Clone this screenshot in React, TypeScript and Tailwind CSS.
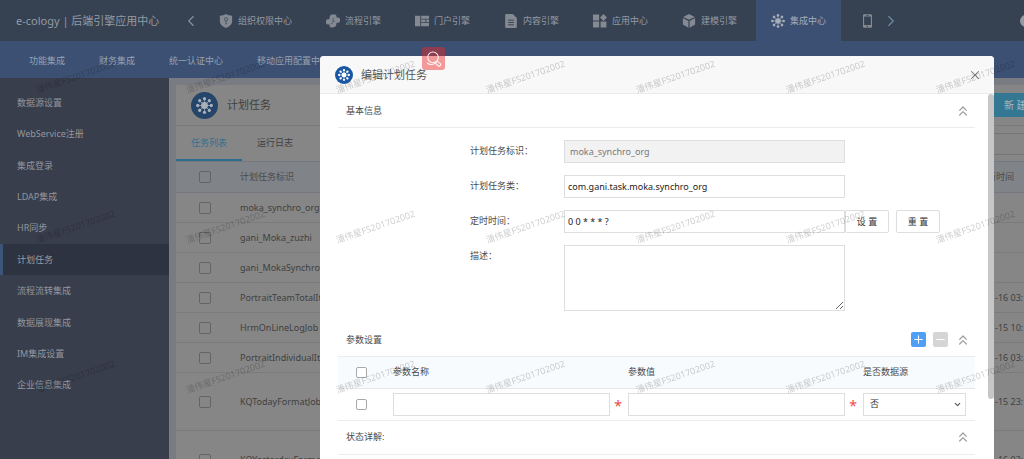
import React, { useState } from "react";
import { ChevronDown, ChevronLeft, ChevronRight, ChevronsUp, Minus, Plus, X } from "lucide-react";

type IconProps = { className?: string };

const HubIcon: React.FC<IconProps> = ({ className }) => (
  <svg viewBox="0 0 24 24" className={className} fill="currentColor" stroke="currentColor" aria-hidden="true">
    <circle cx="12" cy="12" r="4.8" stroke="none" />
    {[0, 45, 90, 135, 180, 225, 270, 315].map((angle) => (
      <g key={angle} transform={`rotate(${angle} 12 12)`}>
        <line x1="12" y1="9" x2="12" y2="3" strokeWidth="1" />
        <circle cx="12" cy="2.4" r="2.3" stroke="none" />
      </g>
    ))}
  </svg>
);

const ShieldIcon: React.FC<IconProps> = ({ className }) => (
  <svg viewBox="0 0 24 24" className={className} fill="currentColor" aria-hidden="true">
    <path d="M12 0C9 2 5.500 2.800 1.500 3v10c0 5 5 9 10.500 11 5.500-2 10.500-6 10.500-11V3c-4-.2-7.500-1-10.500-3z" />
    <circle cx="12" cy="9" r="2.800" fill="none" stroke="#4b5462" strokeWidth="1.600" />
    <path d="M12 12v6M12 15.500h2" stroke="#4b5462" strokeWidth="1.600" />
  </svg>
);

const FlowIcon: React.FC<IconProps> = ({ className }) => (
  <svg viewBox="0 0 24 24" className={className} fill="currentColor" aria-hidden="true">
    <path d="M10 1h5a3 3 0 0 1 3 3v2h3a3 3 0 0 1 3 3v3a3 3 0 0 1-3 3h-3v1c0 4-2 7-6 7H9a3 3 0 0 1-3-3v-2H3a3 3 0 0 1-3-3v-3a3 3 0 0 1 3-3h3V8c0-4 1-6 4-7z" />
    <path d="M14 7c-3 0-2 3-2 5s0 5-4 5M12 12h3" fill="none" stroke="#364152" strokeWidth="1" />
  </svg>
);

const PortalIcon: React.FC<IconProps> = ({ className }) => (
  <svg viewBox="0 0 24 24" className={className} fill="currentColor" aria-hidden="true">
    <path d="M0 3h9v18H0zM10.500 3H24v5H10.500zM10.500 9.500H18V14h-7.500zM19.500 9.500H24V14h-4.500zM10.500 15.500H24V21H10.500z" />
  </svg>
);

const DocIcon: React.FC<IconProps> = ({ className }) => (
  <svg viewBox="0 0 24 24" className={className} fill="currentColor" aria-hidden="true">
    <path d="M4 0h11l7 7v15a2 2 0 0 1-2 2H4a2 2 0 0 1-2-2V2a2 2 0 0 1 2-2z" />
    <path d="M7 10.500h10M7 14.500h10M7 18.500h10" fill="none" stroke="#364152" strokeWidth="1.600" />
  </svg>
);

const AppsIcon: React.FC<IconProps> = ({ className }) => (
  <svg viewBox="0 0 24 24" className={className} fill="currentColor" aria-hidden="true">
    <path d="M0 1h10.500v10H0zM0 13h10.500v10H0zM13 13h10v10H13zM18 0l6 6-6 6-6-6z" />
  </svg>
);

const CubeIcon: React.FC<IconProps> = ({ className }) => (
  <svg viewBox="0 0 24 24" className={className} fill="currentColor" aria-hidden="true">
    <path d="M12 0l10 5-10 5L2 5zM1.500 7L11 12v11.500L1.500 18zM22.500 7L13 12v11.500l9.500-5.500z" />
  </svg>
);

const PhoneIcon: React.FC<IconProps> = ({ className }) => (
  <svg viewBox="0 0 16 24" className={className} aria-hidden="true">
    <path
      fill="currentColor"
      fillRule="evenodd"
      d="M2 0h12a2 2 0 0 1 2 2v20a2 2 0 0 1-2 2H2a2 2 0 0 1-2-2V2a2 2 0 0 1 2-2zm0 4v15h12V4zM6 1.500v1h4v-1zM8 20.300a1.300 1.300 0 1 0 0 2.500 1.300 1.300 0 0 0 0-2.500z"
    />
  </svg>
);

const topNav = [
  { name: "组织权限中心", icon: ShieldIcon },
  { name: "流程引擎", icon: FlowIcon },
  { name: "门户引擎", icon: PortalIcon },
  { name: "内容引擎", icon: DocIcon },
  { name: "应用中心", icon: AppsIcon },
  { name: "建模引擎", icon: CubeIcon },
  { name: "集成中心", icon: HubIcon, active: true },
];

const subNav = ["功能集成", "财务集成", "统一认证中心", "移动应用配置中心"];

const sideMenu = [
  "数据源设置",
  "WebService注册",
  "集成登录",
  "LDAP集成",
  "HR同步",
  "计划任务",
  "流程流转集成",
  "数据展现集成",
  "IM集成设置",
  "企业信息集成",
];

const tasks = [
  { name: "moka_synchro_org", time: "" },
  { name: "gani_Moka_zuzhi", time: "" },
  { name: "gani_MokaSynchro", time: "" },
  { name: "PortraitTeamTotalIt", time: "-16 03:" },
  { name: "HrmOnLineLogJob", time: "-15 10:" },
  { name: "PortraitIndividualIt", time: "-16 03:" },
  { name: "KQTodayFormatJob", time: "-15 23:", tall: true },
  { name: "KQYesterdayFormat", time: "-16 03:", tall: true },
];

const Header = () => (
  <header className="flex h-[41px] shrink-0 items-center overflow-hidden bg-[#364152] text-[#949aa2]">
    <h1 className="w-[172px] shrink-0 whitespace-nowrap pl-4 text-[11px]">e-cology | 后端引擎应用中心</h1>
    <button type="button" aria-label="上一页" className="flex w-8 shrink-0 pl-[10px] text-[#8494a0]">
      <ChevronLeft className="h-[18px] w-[18px]" strokeWidth={1.5} />
    </button>
    <nav className="flex h-full gap-1">
      {topNav.map(({ name, icon: Icon, active }) => (
        <a
          key={name}
          href="#"
          className={`flex items-center gap-[5px] whitespace-nowrap px-[15px] ${active ? "bg-[#3c5073] text-[#a4acb8]" : ""}`}
        >
          <Icon className={`h-[14px] w-[14px] shrink-0 ${active ? "text-[#a8aeb8]" : "text-[#858a92]"}`} />
          {name}
        </a>
      ))}
    </nav>
    <a href="#" aria-label="移动" className="ml-[22px] shrink-0 text-[#858a92]">
      <PhoneIcon className="h-[14px] w-[9px]" />
    </a>
    <button type="button" aria-label="下一页" className="ml-[10px] shrink-0 text-[#6b8ea3]">
      <ChevronRight className="h-[18px] w-[18px]" strokeWidth={1.5} />
    </button>
    <span className="-mr-2 ml-auto h-3 w-3 shrink-0 rounded-full bg-[#949aa2]" />
  </header>
);

const Sidebar = () => (
  <aside className="w-[169px] shrink-0 bg-[#383e4c] pt-[9px]">
    <ul className="flex h-[314px] flex-col">
      {sideMenu.map((item) => {
        const active = item === "计划任务";
        return (
          <li key={item} className="flex-1">
            <a
              href="#"
              className={`flex h-full items-center border-l-[3px] pl-[14px] ${
                active ? "border-[#3c5579] bg-[#2d3341] text-[#9a9da5]" : "border-transparent text-[#93969d]"
              }`}
            >
              {item}
            </a>
          </li>
        );
      })}
    </ul>
  </aside>
);

const checkStyle = "block h-[11px] w-[11px] appearance-none rounded-xs border border-[#a8a8a8] bg-white";
const taskCheckStyle = "block h-3 w-3 appearance-none rounded-xs border border-[#646464]";

const TaskList = () => (
  <main className="min-w-0 flex-1 bg-[#797b82] pl-[7px] pt-[7px]">
    <div className="overflow-hidden bg-[#868686] text-[#3f3f3f]">
      <div className="flex h-[41px] items-center border-b border-[#7a7a7a] pl-[15px]">
        <span className="flex h-[27px] w-[27px] items-center justify-center rounded-full bg-[#25456b] text-[#aab0b8]">
          <HubIcon className="h-[17px] w-[17px]" />
        </span>
        <h2 className="ml-[9px] text-[11px]">计划任务</h2>
        <button
          type="button"
          className="ml-auto h-6 w-9 overflow-hidden whitespace-nowrap bg-[#347793] pl-4 text-left text-[10px] text-[#a9b6bf]"
        >
          新 建
        </button>
      </div>
      <div className="flex h-[35px] items-center">
        <a href="#" className="flex h-full items-center border-b-2 border-[#2c6c8c] px-[15px] text-[#2f7191]">
          任务列表
        </a>
        <a href="#" className="flex h-full items-center border-b-2 border-transparent px-[15px]">
          运行日志
        </a>
        <input type="search" aria-label="搜索" className="ml-auto h-[22px] w-12 appearance-none border-y border-[#767676]" />
      </div>
      <table className="w-full table-fixed border-collapse">
        <thead>
          <tr className="h-[31px] border-y border-[#75797f] bg-[#808388] text-left text-[#4a4a4a]">
            <th className="w-[64px] pl-[23px]">
              <input type="checkbox" aria-label="全选" className={taskCheckStyle} />
            </th>
            <th className="font-normal">计划任务标识</th>
            <th className="w-[37px] whitespace-nowrap font-normal">新时间</th>
          </tr>
        </thead>
        <tbody>
          {tasks.map((task) => (
            <tr key={task.name} className={`border-b border-[#7b7b7b] ${task.tall ? "h-[58px]" : "h-[30px]"}`}>
              <td className="pl-[23px]">
                <input type="checkbox" aria-label={task.name} className={taskCheckStyle} />
              </td>
              <td className="whitespace-nowrap">{task.name}</td>
              <td className="whitespace-nowrap pl-2">{task.time}</td>
            </tr>
          ))}
        </tbody>
      </table>
    </div>
  </main>
);

const SectionTitle: React.FC<{ title: string; children?: React.ReactNode }> = ({ title, children }) => (
  <div className="flex h-[34px] items-center justify-between border-b border-[#ececec] pl-2 pr-1">
    <h3>{title}</h3>
    <div className="flex items-center gap-[7px]">
      {children}
      <button type="button" aria-label="收起" className="text-[#9c9c9c]">
        <ChevronsUp className="h-4 w-4" strokeWidth={1.8} />
      </button>
    </div>
  </div>
);

const inputStyle = "h-[23px] min-w-0 border border-[#dedede] bg-white px-[3px] text-[#222] outline-none";
const buttonStyle = "h-[23px] w-11 rounded-xs border border-[#dedede] bg-white text-[#333]";

const EditDialog = () => {
  const [taskClass, setTaskClass] = useState("com.gani.task.moka.synchro_org");
  const [cron, setCron] = useState("0 0 * * * ?");
  const [desc, setDesc] = useState("");

  return (
    <div className="fixed inset-0 flex pl-80 pr-[30px] pt-14">
      <div
        role="dialog"
        aria-label="编辑计划任务"
        className="flex min-w-0 flex-1 flex-col overflow-hidden rounded-t-[4px] bg-white text-[#4a4a4a]"
      >
        <div className="flex h-[38px] shrink-0 items-center border-b border-[#ebebeb] bg-[#f8f8f8] pl-[15px] pr-3">
          <span className="flex h-[18px] w-[18px] items-center justify-center rounded-full bg-[#1a57a3] text-white">
            <HubIcon className="h-3 w-3" />
          </span>
          <h2 className="ml-2 text-[11px] text-[#555]">编辑计划任务</h2>
          <button type="button" aria-label="关闭" className="ml-auto text-[#777]">
            <X className="h-[14px] w-[14px]" strokeWidth={1.8} />
          </button>
        </div>

        <div className="flex min-h-0 flex-1">
          <div className="min-w-0 flex-1 overflow-hidden pl-[18px] pr-[13px]">
            <SectionTitle title="基本信息" />
            <form className="grid grid-cols-[94px_281px_1fr] gap-y-3 pb-3 pl-[132px] pt-3">
              <label htmlFor="taskId" className="leading-[22px]">
                计划任务标识：
              </label>
              <input
                id="taskId"
                disabled
                value="moka_synchro_org"
                className="h-[23px] border border-[#dedede] bg-[#f2f2f2] px-[5px] text-[#777]"
              />
              <span />

              <label htmlFor="taskClass" className="leading-[22px]">
                计划任务类：
              </label>
              <input id="taskClass" value={taskClass} onChange={(e) => setTaskClass(e.target.value)} className={inputStyle} />
              <span />

              <label htmlFor="cron" className="leading-[22px]">
                定时时间：
              </label>
              <input id="cron" value={cron} onChange={(e) => setCron(e.target.value)} className={inputStyle} />
              <div className="flex gap-[7px]">
                <button type="button" className={buttonStyle}>
                  设 置
                </button>
                <button type="button" className={buttonStyle}>
                  重 置
                </button>
              </div>

              <label htmlFor="desc" className="leading-[22px]">
                描述：
              </label>
              <textarea
                id="desc"
                value={desc}
                onChange={(e) => setDesc(e.target.value)}
                className="h-[66px] resize border border-[#dedede] bg-white p-1 outline-none"
              />
            </form>

            <SectionTitle title="参数设置">
              <button type="button" aria-label="添加" className="flex h-[15px] w-[15px] items-center justify-center rounded-xs bg-[#4f9ff6] text-white">
                <Plus className="h-[13px] w-[13px]" strokeWidth={2} />
              </button>
              <button type="button" aria-label="删除" className="flex h-[15px] w-[15px] items-center justify-center rounded-xs bg-[#d5d5d5] text-white">
                <Minus className="h-[13px] w-[13px]" strokeWidth={2} />
              </button>
            </SectionTitle>
            <table className="w-full table-fixed border-collapse">
              <thead>
                <tr className="h-[31px] border-b border-[#e4e8eb] bg-[#f7fbfe] text-left">
                  <th className="w-[55px] pl-[18px]">
                    <input type="checkbox" aria-label="全选参数" className={checkStyle} />
                  </th>
                  <th className="font-normal">参数名称</th>
                  <th className="font-normal">参数值</th>
                  <th className="w-[112px] font-normal">是否数据源</th>
                </tr>
              </thead>
              <tbody>
                <tr className="h-8 border-b border-[#ececec]">
                  <td className="pl-[18px]">
                    <input type="checkbox" aria-label="选择参数" className={checkStyle} />
                  </td>
                  {["参数名称", "参数值"].map((name) => (
                    <td key={name}>
                      <div className="flex items-center">
                        <input aria-label={name} className={`${inputStyle} flex-1`} />
                        <span className="h-[23px] w-[18px] pr-[2px] text-center text-[14px] leading-[26px] text-[#f04848]">*</span>
                      </div>
                    </td>
                  ))}
                  <td className="pr-[9px]">
                    <div className="relative">
                      <select
                        aria-label="是否数据源"
                        className="block h-[23px] w-full appearance-none border border-[#dedede] bg-white px-[6px] text-[#333]"
                      >
                        <option>否</option>
                        <option>是</option>
                      </select>
                      <ChevronDown
                        className="pointer-events-none absolute right-1 top-[7px] h-[9px] w-[9px] text-[#555]"
                        strokeWidth={3}
                      />
                    </div>
                  </td>
                </tr>
              </tbody>
            </table>

            <SectionTitle title="状态详解:" />
          </div>
          <div className="w-[6px] shrink-0">
            <div className="h-[305px] rounded-full bg-[#c6c6c6]" />
          </div>
        </div>
      </div>
    </div>
  );
};

const Watermark = () => (
  <div className="pointer-events-none fixed inset-0 overflow-hidden pt-[2px]">
    {/* one tile wider than the window so the last column is not dropped */}
    <div className="-mr-[150px] grid auto-rows-[150px] grid-cols-[repeat(auto-fill,150px)]">
      {Array.from({ length: 28 }).map((_, index) => (
        <div key={index} className="flex items-center justify-center">
          <span className="-rotate-[19deg] whitespace-nowrap text-black/20">潘伟星FS201702002</span>
        </div>
      ))}
    </div>
  </div>
);

const App = () => (
  <div className="flex h-screen flex-col overflow-hidden font-['Noto_Sans','Noto_Sans_CJK_SC',sans-serif] text-[9px] leading-[14px]">
    <Header />
    <nav className="flex h-[37px] shrink-0 items-center gap-[34px] whitespace-nowrap bg-[#3c5073] px-[29px] pt-[2px] text-[#98a1b0]">
      {subNav.map((item) => (
        <a key={item} href="#">
          {item}
        </a>
      ))}
    </nav>
    <div className="flex min-h-0 flex-1">
      <Sidebar />
      <TaskList />
    </div>

    <EditDialog />

    <button
      type="button"
      aria-label="搜索图片"
      className="fixed left-[422px] top-[47px] flex h-[23px] w-[23px] items-center justify-center rounded-[3px] bg-[#ef2626]/45 text-white/90"
    >
      <svg viewBox="0 0 24 24" className="h-4 w-4" fill="none" stroke="currentColor" strokeWidth="1.6">
        <circle cx="10.500" cy="9.500" r="8" />
        <path d="M1.500 18c3.500 2.500 8 3 12 .5" />
        <rect x="15" y="16.500" width="8" height="4.500" rx="2.200" transform="rotate(40 18 18)" />
      </svg>
    </button>
    <Watermark />
  </div>
);

export default App;
